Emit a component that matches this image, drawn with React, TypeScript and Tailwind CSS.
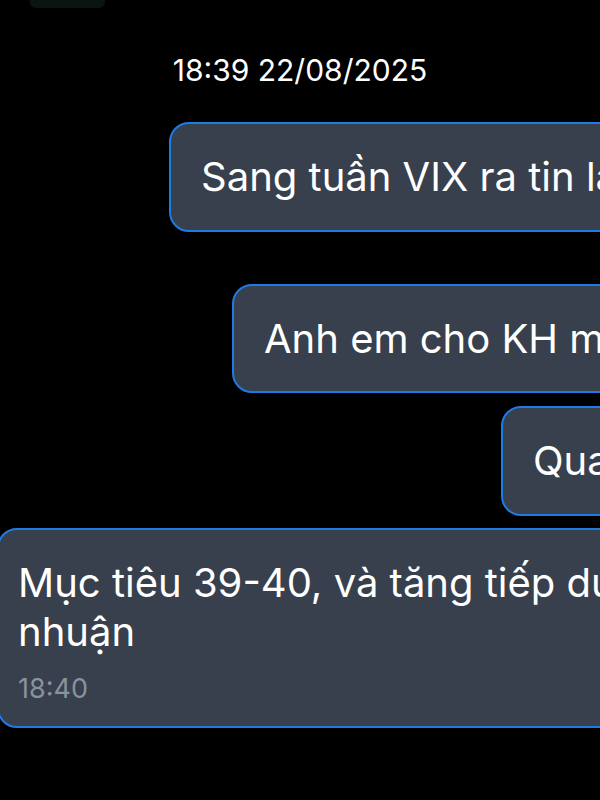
import React from 'react';

const bubble =
  'shrink-0 whitespace-nowrap rounded-[20px] border-2 border-[#1f7be4] bg-[#37404c] text-white';

export default function App() {
  return (
    <div
      className="w-[600px] h-[800px] overflow-hidden bg-black flex flex-col"
      style={{ fontFamily: 'Inter, "Noto Sans", sans-serif' }}
    >
      {/* bottom edge of a previous element */}
      <div className="ml-[30px] w-[75px] h-[8px] rounded-b-[6px] bg-[#0b1510]" />

      <div className="mt-[44px] text-center text-[30px] leading-[36px] text-white">
        18:39 22/08/2025
      </div>

      <div className="mt-[34px] flex pl-[169px]">
        <div className={`${bubble} pl-[30px] pr-[40px] py-[30px] text-[40px] leading-[46px]`}>
          Sang tuần VIX ra tin lần nữa
        </div>
      </div>

      <div className="mt-[52px] flex pl-[232px]">
        <div className={`${bubble} pl-[30px] pr-[40px] py-[29px] text-[40px] leading-[47px]`}>
          Anh em cho KH mua thêm
        </div>
      </div>

      <div className="mt-[13px] flex pl-[501px]">
        <div className={`${bubble} pl-[30px] pr-[40px] py-[30px] text-[40px] leading-[46px]`}>
          Quan sát
        </div>
      </div>

      <div className="mt-[12px] flex -ml-[3px]">
        <div className={`${bubble} pl-[19px] pr-[40px] pt-[28px] pb-[20px]`}>
          <p className="text-[40px] leading-[49px]">
            Mục tiêu 39-40, và tăng tiếp dựa trên lợi
            <br />
            nhuận
          </p>
          <p className="mt-[16px] text-[27px] leading-[34px] text-[#8a929c]">18:40</p>
        </div>
      </div>
    </div>
  );
}
